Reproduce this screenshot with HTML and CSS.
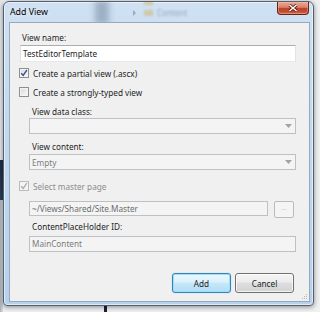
FILE: index.html
```html
<!DOCTYPE html>
<html lang="en">
<head>
<meta charset="utf-8">
<title>Add View</title>
<link rel="stylesheet" href="styles.css">
</head>
<body>
<div class="desk">
  <div class="window">
    <div class="titlebar">
      <div class="behind">
        <span class="ghost-bar"></span>
        <span class="ghost-arrow"></span>
        <span class="ghost-folder f1"></span>
        <span class="ghost-folder f2"></span>
        <span class="ghost-text">Content</span>
      </div>
      <span class="title">Add View</span>
      <span class="close">
        <svg width="10" height="8" viewBox="0 0 10 8"><path d="M1.5 1 L8.5 7 M8.5 1 L1.5 7" stroke="#5a1408" stroke-width="3"/><path d="M1.5 1 L8.5 7 M8.5 1 L1.5 7" stroke="#fff" stroke-width="1.6"/></svg>
      </span>
    </div>

    <div class="panel">
      <div class="lbl">View name:</div>
      <div class="field name">TestEditorTemplate</div>

      <div class="check c1">
        <span class="box"><svg width="8" height="8" viewBox="0 0 8 8"><path d="M1.2 4.2 L3.2 6.4 L6.9 1" fill="none" stroke="#3c5488" stroke-width="1.4"/></svg></span>
        <span>Create a partial view (.ascx)</span>
      </div>
      <div class="check c2">
        <span class="box"></span>
        <span>Create a strongly-typed view</span>
      </div>

      <div class="indent">
        <div class="lbl l-class">View data class:</div>
        <div class="field off combo">
          <span></span>
          <svg width="7" height="4" viewBox="0 0 7 4"><path d="M0 0 H7 L3.5 4 Z" fill="#a3a3a3"/></svg>
        </div>
        <div class="lbl l-content">View content:</div>
        <div class="field off combo c-content">
          <span>Empty</span>
          <svg width="7" height="4" viewBox="0 0 7 4"><path d="M0 0 H7 L3.5 4 Z" fill="#a3a3a3"/></svg>
        </div>
      </div>

      <div class="check c3 off">
        <span class="box"><svg width="8" height="8" viewBox="0 0 8 8"><path d="M1.2 4.2 L3.2 6.4 L6.9 1" fill="none" stroke="#a9a9a9" stroke-width="1.3"/></svg></span>
        <span>Select master page</span>
      </div>

      <div class="indent">
        <div class="master">
          <div class="field off path">~/Views/Shared/Site.Master</div>
          <div class="browse">...</div>
        </div>
        <div class="lbl l-holder">ContentPlaceHolder ID:</div>
        <div class="field off holder">MainContent</div>
      </div>

      <div class="actions">
        <div class="btn default">Add</div>
        <div class="btn">Cancel</div>
      </div>

      <svg class="grip" width="6" height="6" viewBox="0 0 6 6">
        <rect x="4" y="0" width="1" height="1" fill="#b5b5b5"/>
        <rect x="2" y="2" width="1" height="1" fill="#b5b5b5"/>
        <rect x="4" y="2" width="1" height="1" fill="#b5b5b5"/>
        <rect x="0" y="4" width="1" height="1" fill="#b5b5b5"/>
        <rect x="2" y="4" width="1" height="1" fill="#b5b5b5"/>
        <rect x="4" y="4" width="1" height="1" fill="#b5b5b5"/>
      </svg>
    </div>
  </div>
</div>
</body>
</html>
```

FILE: styles.css
```css
* { box-sizing: border-box; }
html, body { margin: 0; }

body {
  width: 320px;
  height: 312px;
  overflow: hidden;
  background:
    linear-gradient(#e4e7ea, #e4e7ea) 0 0 / 3px 160px no-repeat,
    linear-gradient(#1f2e46, #2c3e58) 0 160px / 3px 40px no-repeat,
    linear-gradient(to right, #a9b1bb, #d9dde1) 0 0 / 3px 312px no-repeat,
    #eef0f2;
  font-family: "Noto Sans", "Liberation Sans", sans-serif;
  font-size: 8.2px;
  color: #1e1e1e;
}

.desk {
  position: relative;
  height: 312px;
  padding: 1px 6px 6px 3px;
}

/* dark bar of the window behind, visible under the dialog */
.desk::before {
  content: "";
  position: absolute;
  left: 104px;
  top: 296px;
  width: 3px;
  height: 16px;
  background: #16243a;
}

.window {
  position: relative;
  width: 311px;
  height: 305px;
  display: flex;
  flex-direction: column;
  padding: 0 3px 3px 5px;
  border: 1px solid #55606d;
  border-radius: 6px 6px 4px 4px;
  background: linear-gradient(#cfe1f3, #c2d9f0 40%, #b6d1ee);
  box-shadow: 0 1px 5px rgba(0, 0, 0, .45), inset 0 0 0 1px rgba(255, 255, 255, .55);
}

.titlebar {
  position: relative;
  height: 20px;
  display: flex;
  justify-content: space-between;
  align-items: flex-start;
}

.behind {
  position: absolute;
  left: 0;
  top: 0;
  right: 40px;
  height: 20px;
  overflow: hidden;
}
.ghost-bar {
  position: absolute;
  left: 86px;
  top: -2px;
  width: 14px;
  height: 24px;
  background: rgba(95, 115, 140, .45);
  filter: blur(3px);
}
.ghost-arrow {
  position: absolute;
  left: 124px;
  top: 8px;
  width: 0;
  height: 0;
  border-left: 3px solid rgba(60, 70, 90, .35);
  border-top: 3px solid transparent;
  border-bottom: 3px solid transparent;
  filter: blur(.6px);
}
.ghost-folder {
  position: absolute;
  left: 135px;
  width: 9px;
  height: 6px;
  background: rgba(210, 170, 80, .45);
  filter: blur(1px);
}
.ghost-folder.f1 { top: -3px; }
.ghost-folder.f2 { top: 8px; }
.ghost-text {
  position: absolute;
  left: 148px;
  top: 6px;
  font-size: 8px;
  line-height: 10px;
  color: rgba(50, 60, 80, .35);
  filter: blur(.8px);
}

.title {
  position: relative;
  margin-left: 1px;
  line-height: 20px;
  font-size: 8.8px;
  color: #000;
  text-shadow: 0 0 4px rgba(255, 255, 255, .9);
}

.close {
  position: relative;
  width: 32px;
  height: 13px;
  margin-right: 1px;
  display: flex;
  align-items: center;
  justify-content: center;
  border: 1px solid #6b2216;
  border-top: 0;
  border-radius: 0 0 4px 4px;
  background: linear-gradient(#e9a996, #d8826c 45%, #c0412a 50%, #c24a30 80%, #d6775a);
  box-shadow: inset 0 0 0 1px rgba(255, 200, 190, .35);
}

.panel {
  position: relative;
  flex: 1;
  display: flex;
  flex-direction: column;
  padding: 9px 13px 0 10px;
  background: #f0f0f0;
  border: 1px solid #97a9bd;
}

.lbl {
  height: 12px;
  line-height: 12px;
  padding-left: 2px;
}
.indent { margin-left: 9px; display: flex; flex-direction: column; }
.indent .lbl { padding-left: 3px; }
.l-class { margin-top: 8px; }
.l-content { margin-top: 7px; }
.l-holder { margin-top: 3px; }

.field {
  height: 17px;
  line-height: 15px;
  padding-left: 2px;
  background: #fff;
  border: 1px solid;
  border-color: #abadb3 #e2e3ea #e3e9ef #dbdfe6;
  white-space: nowrap;
}
.field.name { margin-top: 1px; }
.field.off {
  background: #f4f4f4;
  border-color: #bdc0c4;
  color: #7b7b7b;
}

.combo {
  height: 16px;
  display: flex;
  align-items: center;
  justify-content: space-between;
  padding-right: 3px;
}
.c-content { margin-top: 1px; }

.check {
  height: 12px;
  display: flex;
  align-items: center;
  margin-left: -1px;
}
.check .box {
  width: 10px;
  height: 10px;
  margin-right: 4px;
  display: flex;
  align-items: center;
  justify-content: center;
  border: 1px solid #8e8f8f;
  background: linear-gradient(135deg, #d6d9de, #fbfbfb);
  box-shadow: inset 0 0 0 1px #f4f4f4;
}
.check.off { color: #8d8d8d; }
.check.off .box {
  border-color: #bcbcbc;
  background: #f4f4f4;
}
.c1 { margin-top: 5px; }
.c2 { margin-top: 7px; }
.c3 { margin-top: 10px; }

.master {
  margin-top: 9px;
  display: flex;
  align-items: flex-start;
  justify-content: space-between;
  padding-right: 2px;
}
.field.path {
  width: 239px;
  height: 15px;
  line-height: 13px;
  color: #6c6c6c;
}
.browse {
  width: 20px;
  height: 17px;
  line-height: 12px;
  text-align: center;
  font-size: 6px;
  color: #b0b0b0;
  background: #f4f4f4;
  border: 1px solid #b9bcbf;
  border-radius: 2px;
}
.field.holder { margin-top: 3px; height: 16px; line-height: 14px; }

.actions {
  display: flex;
  justify-content: flex-end;
  gap: 4px;
  margin-top: 21px;
  margin-right: 2px;
}
.btn {
  width: 59px;
  height: 20px;
  display: flex;
  align-items: center;
  justify-content: center;
  color: #1e1e1e;
  border: 1px solid #707070;
  border-radius: 3px;
  background: linear-gradient(#f4f4f4, #ececec 45%, #dedede 50%, #d2d2d2);
  box-shadow: inset 0 0 0 1px rgba(255, 255, 255, .75);
}
.btn.default {
  border-color: #3c7fb1;
  background: linear-gradient(#ecf7fd, #dcf1fc 45%, #c6e8fb 50%, #b2dcf4);
  box-shadow: inset 0 0 0 1px #98e3fb, 0 0 1px #6fc4ec;
}

.grip {
  position: absolute;
  right: 1px;
  bottom: 1px;
}
```
